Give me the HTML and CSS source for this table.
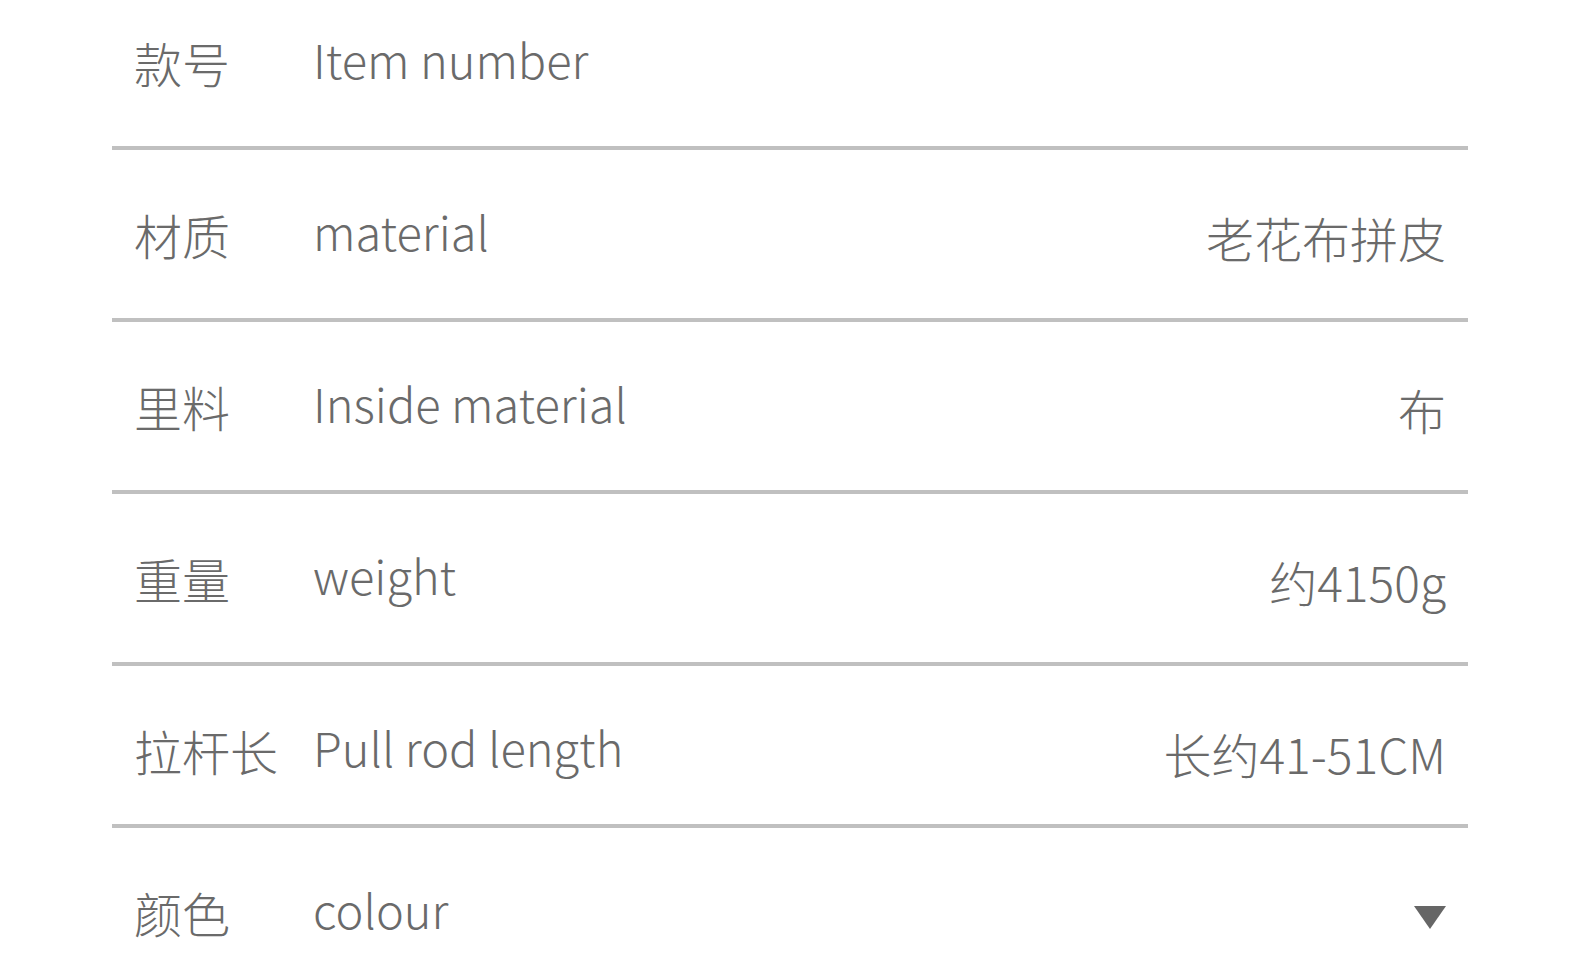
FILE: index.html
```html
<!DOCTYPE html>
<html lang="zh-CN">
<head>
<meta charset="utf-8">
<title>商品参数</title>
<link rel="stylesheet" href="styles.css">
</head>
<body>
<div class="list">
  <div class="row">
    <div class="label">款号</div>
    <div class="en">Item number</div>
    <div class="value"></div>
  </div>
  <div class="row">
    <div class="label">材质</div>
    <div class="en">material</div>
    <div class="value">老花布拼皮</div>
  </div>
  <div class="row">
    <div class="label">里料</div>
    <div class="en">Inside material</div>
    <div class="value">布</div>
  </div>
  <div class="row">
    <div class="label">重量</div>
    <div class="en">weight</div>
    <div class="value">约4150g</div>
  </div>
  <div class="row row-short">
    <div class="label">拉杆长</div>
    <div class="en">Pull rod length</div>
    <div class="value">长约41-51CM</div>
  </div>
  <div class="row row-last">
    <div class="label">颜色</div>
    <div class="en">colour</div>
    <div class="value">
      <svg class="caret" width="32" height="23" viewBox="0 0 32 23"><polygon points="0,0 32,0 16,23" fill="#666"/></svg>
    </div>
  </div>
</div>
</body>
</html>
```
FILE: styles.css
```css
html, body {
  margin: 0;
  padding: 0;
  background: #ffffff;
  overflow: hidden;
}
body {
  font-family: "Noto Sans CJK SC Light", "Noto Sans CJK SC DemiLight", "Noto Sans CJK SC", "Noto Sans", sans-serif;
  font-weight: 300;
  color: #6a6a6a;
  font-size: 48px;
}
.list {
  margin: -22px 112px 0 112px;
}
.row {
  box-sizing: border-box;
  height: 172px;
  display: flex;
  align-items: flex-start;
  padding: 51px 22px 0 22px;
  border-bottom: 4px solid #c0c0c0;
  line-height: 67px;
}
.row-short {
  height: 162px;
}
.row-last {
  border-bottom: none;
  height: 200px;
}
.label {
  width: 179px;
  flex: none;
}
.en {
  flex: 1;
  margin-top: -4px;
  font-size: 47px;
}
.value {
  margin-top: 3px;
  text-align: right;
}
.caret {
  display: block;
  margin-top: 24px;
}
```
